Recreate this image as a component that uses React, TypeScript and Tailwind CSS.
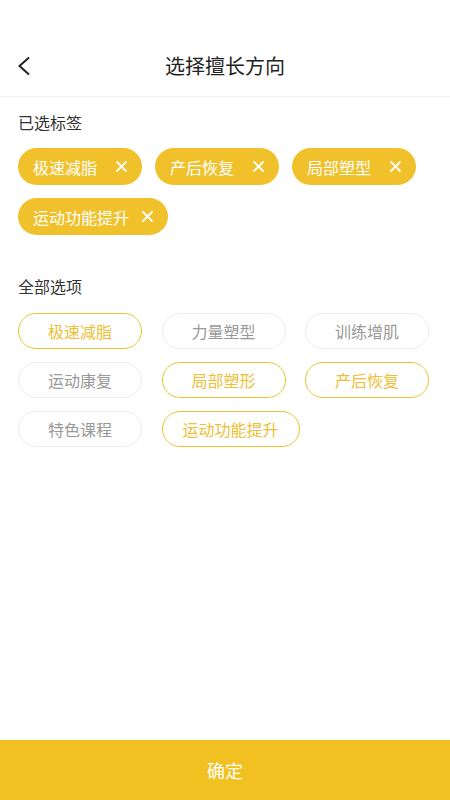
import React from "react";

const selected = ["极速减脂", "产后恢复", "局部塑型", "运动功能提升"];
const options: { label: string; on: boolean }[] = [
  { label: "极速减脂", on: true },
  { label: "力量塑型", on: false },
  { label: "训练增肌", on: false },
  { label: "运动康复", on: false },
  { label: "局部塑形", on: true },
  { label: "产后恢复", on: true },
  { label: "特色课程", on: false },
  { label: "运动功能提升", on: true },
];

function XIcon() {
  return (
    <svg width="11" height="11" viewBox="0 0 11 11" fill="none">
      <path d="M1 1L10 10M10 1L1 10" stroke="white" strokeWidth="1.8" strokeLinecap="round" />
    </svg>
  );
}

export default function App() {
  return (
    <div
      className="w-[450px] h-[800px] bg-white flex flex-col"
      style={{ fontFamily: '"Noto Sans CJK SC", "Noto Sans", sans-serif' }}
    >
      <div className="h-[40px]" />
      <div className="relative h-[52px] flex items-center justify-center">
        <div className="absolute left-[17px] top-[16px]">
          <svg width="14" height="20" viewBox="0 0 14 20" fill="none">
            <path d="M12 1.5L2.5 10L12 18.5" stroke="#222" strokeWidth="2" strokeLinejoin="miter" />
          </svg>
        </div>
        <span className="text-[20px] leading-[28px] text-[#222]">选择擅长方向</span>
      </div>
      <div className="h-[4px]" />
      <div className="h-px bg-[#f2f2f2]" />

      <div className="px-[18px] pt-[13px]">
        <div className="text-[16px] leading-[24px] text-[#333]">已选标签</div>
        <div className="mt-[14px] flex flex-wrap gap-x-[13px] gap-y-[13px]">
          {selected.map((s) => (
            <div
              key={s}
              className="h-[37px] min-w-[124px] px-[15px] rounded-full bg-[#f0c12a] flex items-center justify-between gap-[13px]"
            >
              <span className="text-[16px] leading-[24px] text-white">{s}</span>
              <XIcon />
            </div>
          ))}
        </div>

        <div className="mt-[39px] text-[16px] leading-[24px] text-[#333]">全部选项</div>
        <div className="mt-[15px] flex flex-wrap gap-x-[19.5px] gap-y-[13px]">
          {options.map((o) => (
            <div
              key={o.label}
              className={
                o.on
                  ? "h-[36px] min-w-[124px] px-[20px] rounded-full border border-[#efc232] flex items-center justify-center"
                  : "h-[36px] min-w-[124px] px-[20px] rounded-full border border-[#ececec] flex items-center justify-center"
              }
            >
              <span
                className={
                  o.on
                    ? "text-[16px] leading-[24px] text-[#ecbf36]"
                    : "text-[16px] leading-[24px] text-[#999999]"
                }
              >
                {o.label}
              </span>
            </div>
          ))}
        </div>
      </div>

      <div className="flex-1" />
      <div className="h-[60px] bg-[#f0c120] flex items-center justify-center">
        <span className="text-[18px] leading-[26px] text-white">确定</span>
      </div>
    </div>
  );
}
